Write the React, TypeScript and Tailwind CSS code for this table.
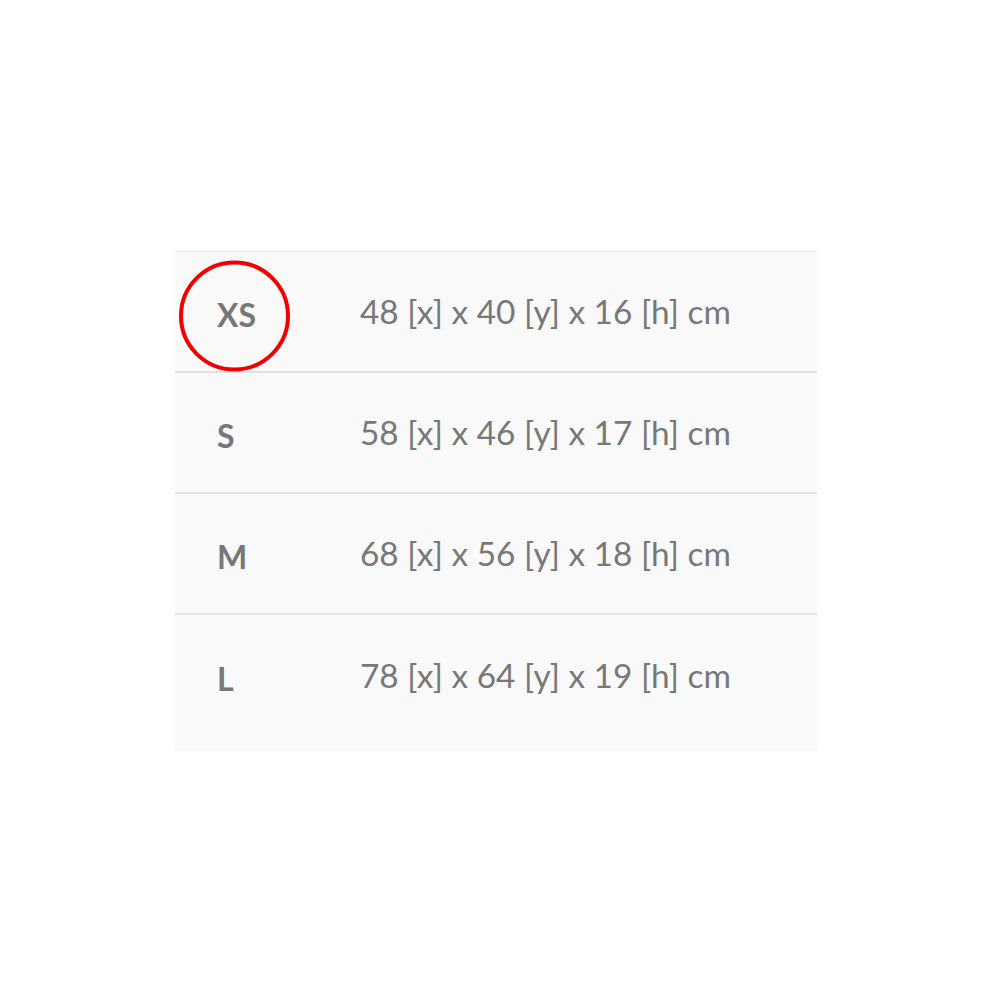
export default function App() {
  const rows = [
    { s: "XS", v: "48 [x] x 40 [y] x 16 [h] cm" },
    { s: "S", v: "58 [x] x 46 [y] x 17 [h] cm" },
    { s: "M", v: "68 [x] x 56 [y] x 18 [h] cm" },
    { s: "L", v: "78 [x] x 64 [y] x 19 [h] cm" },
  ];
  return (
    <div className="w-[1000px] h-[1000px] bg-white flex flex-col" style={{ fontFamily: "Lato, 'Open Sans', sans-serif" }}>
      <div className="mt-[251px] ml-[175px] w-[642px] bg-[#f9f9f9] border-t border-[#ececec]">
        {rows.map((r, i) => (
          <div
            key={r.s}
            className={`flex items-center ${i < 3 ? "h-[121px] border-b-2 border-[#e3e3e3]" : "h-[136px] pb-[14px]"}`}
          >
            <div className="w-[185px] pl-[42px] pt-[8px] relative">
              <span className="text-[32px] font-bold text-[#777777] leading-none">{r.s}</span>
              {i === 0 && (
                <div className="absolute left-[4px] top-[calc(50%+4px)] -translate-y-1/2 w-[111px] h-[111px] rounded-full border-4 border-[#f20000]" />
              )}
            </div>
            <div className="text-[33.4px] text-[#787878] leading-none">{r.v}</div>
          </div>
        ))}
      </div>
    </div>
  );
}
